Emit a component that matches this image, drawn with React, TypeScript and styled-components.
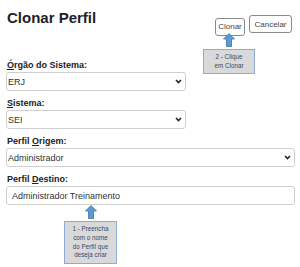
import React from "react";
import styled, { createGlobalStyle } from "styled-components";

const Global = createGlobalStyle`
  html, body { margin: 0; padding: 0; background: #ffffff; }
  body { font-family: "Liberation Sans", Arial, sans-serif; color: #333; }
`;

const Page = styled.div`
  width: 300px;
  height: 267px;
  box-sizing: border-box;
  padding: 8px 5px 0 6px;
  display: flex;
  flex-direction: column;
  overflow: hidden;
`;

const Header = styled.div`
  display: flex;
  justify-content: space-between;
  align-items: flex-start;
  height: 51px;
  padding-right: 3px;
`;

const Title = styled.h1`
  margin: 0 0 0 1px;
  font-size: 15px;
  line-height: 19px;
  font-weight: bold;
  color: #1f2229;
`;

const Buttons = styled.div`
  display: flex;
  gap: 4px;
  margin-top: 7px;
`;

const ButtonWrap = styled.div`
  position: relative;
`;

const Button = styled.button<{ $w: number }>`
  width: ${(p) => p.$w}px;
  height: 18px;
  padding: 0;
  border: 1px solid #8a8a8a;
  border-radius: 3px;
  background: #fff;
  font-family: "Liberation Sans", Arial, sans-serif;
  font-size: 8px;
  color: #444;
`;

const Callout = styled.div<{ $top: number; $left: string }>`
  position: absolute;
  top: ${(p) => p.$top}px;
  left: ${(p) => p.$left};
  display: flex;
  flex-direction: column;
  align-items: center;
  gap: 2px;
`;

const CalloutBox = styled.div<{ $w: number; $h: number }>`
  width: ${(p) => p.$w}px;
  height: ${(p) => p.$h}px;
  box-sizing: border-box;
  background: #d9d9d9;
  border: 1px solid #8eaadb;
  display: flex;
  flex-direction: column;
  justify-content: center;
  align-items: center;
  font-family: "Liberation Sans", Arial, sans-serif;
  font-size: 6.3px;
  line-height: 8.7px;
  color: #3b4a66;
  text-align: center;
`;

const Form = styled.div`
  display: flex;
  flex-direction: column;
`;

const Field = styled.div`
  display: flex;
  flex-direction: column;
  gap: 1px;
  margin-bottom: 6px;
  position: relative;
`;

const Label = styled.label`
  padding-left: 1px;
  font-size: 9px;
  line-height: 12px;
  font-weight: bold;
  color: #222;
  u { text-decoration: underline; }
`;

const SelectBox = styled.div<{ $w?: number }>`
  width: ${(p) => (p.$w ? `${p.$w}px` : "100%")};
  height: 19px;
  box-sizing: border-box;
  border: 1px solid #cfcfcf;
  border-radius: 3px;
  background: #fff;
  display: flex;
  align-items: center;
  justify-content: space-between;
  padding: 0 3px 0 1px;
  font-size: 9px;
  color: #333;
`;

const InputBox = styled.div`
  width: 100%;
  height: 19px;
  box-sizing: border-box;
  border: 1px solid #cfcfcf;
  border-radius: 3px;
  background: #fff;
  display: flex;
  align-items: center;
  padding: 0 5px;
  font-size: 9px;
  color: #333;
`;

const Chevron = () => (
  <svg width="7" height="5" viewBox="0 0 7 5">
    <path d="M1 1 L3.5 3.5 L6 1" fill="none" stroke="#222" strokeWidth="1.6" />
  </svg>
);

const UpArrow = () => (
  <svg width="12" height="14" viewBox="0 0 12 14">
    <polygon
      points="6,0.5 11.5,6 8.5,6 8.5,13.5 3.5,13.5 3.5,6 0.5,6"
      fill="#5b9bd5"
      stroke="#41719c"
      strokeWidth="0.8"
    />
  </svg>
);

export default function App() {
  return (
    <>
      <Global />
      <Page>
        <Header>
          <Title>Clonar Perfil</Title>
          <Buttons>
            <ButtonWrap>
              <Button $w={30}>Clonar</Button>
              <Callout $top={18} $left="-12px">
                <UpArrow />
                <CalloutBox $w={52} $h={25}>
                  <span>2 - Clique</span>
                  <span>em Clonar</span>
                </CalloutBox>
              </Callout>
            </ButtonWrap>
            <Button $w={43}>Cancelar</Button>
          </Buttons>
        </Header>
        <Form>
          <Field>
            <Label>
              <u>Ó</u>rgão do Sistema:
            </Label>
            <SelectBox $w={180}>
              <span>ERJ</span>
              <Chevron />
            </SelectBox>
          </Field>
          <Field>
            <Label>
              <u>S</u>istema:
            </Label>
            <SelectBox $w={180}>
              <span>SEI</span>
              <Chevron />
            </SelectBox>
          </Field>
          <Field>
            <Label>
              Perfil <u>O</u>rigem:
            </Label>
            <SelectBox>
              <span>Administrador</span>
              <Chevron />
            </SelectBox>
          </Field>
          <Field>
            <Label>
              Perfil <u>D</u>estino:
            </Label>
            <InputBox>Administrador Treinamento</InputBox>
            <Callout $top={32} $left="58px">
              <UpArrow />
              <CalloutBox $w={53} $h={43}>
                <span>1 - Preencha</span>
                <span>com o nome</span>
                <span>do Perfil que</span>
                <span>deseja criar</span>
              </CalloutBox>
            </Callout>
          </Field>
        </Form>
      </Page>
    </>
  );
}
